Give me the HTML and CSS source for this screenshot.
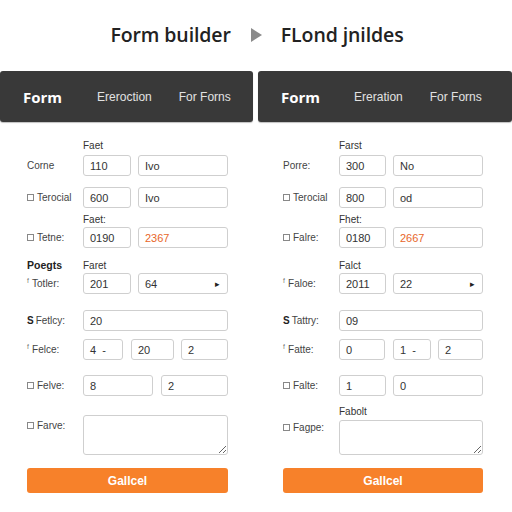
FILE: index.html
```html
<!DOCTYPE html>
<html>
<head>
<meta charset="utf-8">
<link rel="stylesheet" href="styles.css">
</head>
<body>
<div class="title">
  <span class="t1">Form builder</span>
  <svg class="tarrow" width="11" height="14" viewBox="0 0 11 14"><polygon points="0,0 11,7 0,14" fill="#8a8a8a"/></svg>
  <span class="t2">FLond jnildes</span>
</div>
<div class="panels">
  <div class="panel left">
    <div class="head"><span class="hb">Form</span><span class="h1">Ereroction</span><span class="h2">For Forns</span></div>
    <div class="body">
      <div class="cap m17"><span></span><span>Faet</span></div>
      <div class="row m4"><span class="lab">Corne</span><div class="fields"><div class="inp w48">110</div><div class="inp grow">Ivo</div></div></div>
      <div class="row m11"><span class="lab"><i class="cb"></i>Terocial</span><div class="fields"><div class="inp w48">600</div><div class="inp grow">Ivo</div></div></div>
      <div class="cap m5"><span></span><span>Faet:</span></div>
      <div class="row m2"><span class="lab"><i class="cb"></i>Tetne:</span><div class="fields"><div class="inp w48">0190</div><div class="inp grow orange">2367</div></div></div>
      <div class="cap m11"><span class="bold">Poegts</span><span>Faret</span></div>
      <div class="row m2"><span class="lab"><i class="f">ᶠ</i>Totler:</span><div class="fields"><div class="inp w48">201</div><div class="inp grow sel">64<span class="car">&#9656;</span></div></div></div>
      <div class="row m16"><span class="lab"><b>S</b> Fetlcy:</span><div class="fields"><div class="inp grow">20</div></div></div>
      <div class="row m8"><span class="lab"><i class="f">ᶠ</i>Felce:</span><div class="fields"><div class="inp w40">4 &nbsp;-</div><div class="inp w43 g8">20</div><div class="inp grow">2</div></div></div>
      <div class="row m15"><span class="lab"><i class="cb"></i>Felve:</span><div class="fields"><div class="inp w70">8</div><div class="inp grow g8">2</div></div></div>
      <div class="row tall m19"><span class="lab top"><i class="cb"></i>Farve:</span><div class="fields"><textarea class="ta h40" readonly></textarea></div></div>
      <div class="btn m13">Gallcel</div>
    </div>
  </div>
  <div class="panel right">
    <div class="head"><span class="hb">Form</span><span class="h1">Ereration</span><span class="h2">For Forns</span></div>
    <div class="body">
      <div class="cap m17"><span></span><span>Farst</span></div>
      <div class="row m4"><span class="lab">Porre:</span><div class="fields"><div class="inp w47">300</div><div class="inp grow">No</div></div></div>
      <div class="row m11"><span class="lab"><i class="cb"></i>Terocial</span><div class="fields"><div class="inp w47">800</div><div class="inp grow">od</div></div></div>
      <div class="cap m5"><span></span><span>Fhet:</span></div>
      <div class="row m2"><span class="lab"><i class="cb"></i>Falre:</span><div class="fields"><div class="inp w47">0180</div><div class="inp grow orange">2667</div></div></div>
      <div class="cap m11"><span></span><span>Falct</span></div>
      <div class="row m2"><span class="lab"><i class="f">ᶠ</i>Faloe:</span><div class="fields"><div class="inp w47">2011</div><div class="inp grow sel">22<span class="car">&#9656;</span></div></div></div>
      <div class="row m16"><span class="lab"><b>S</b> Tattry:</span><div class="fields"><div class="inp grow">09</div></div></div>
      <div class="row m8"><span class="lab"><i class="f">ᶠ</i>Fatte:</span><div class="fields"><div class="inp w46">0</div><div class="inp w38 g8">1 &nbsp;-</div><div class="inp grow">2</div></div></div>
      <div class="row m15"><span class="lab"><i class="cb"></i>Falte:</span><div class="fields"><div class="inp w47">1</div><div class="inp grow">0</div></div></div>
      <div class="cap m9"><span></span><span>Fabolt</span></div>
      <div class="row tall m3"><span class="lab top2"><i class="cb"></i>Fagpe:</span><div class="fields"><textarea class="ta h35" readonly></textarea></div></div>
      <div class="btn m13">Gallcel</div>
    </div>
  </div>
</div>
</body>
</html>
```
FILE: styles.css
```css
* { box-sizing: border-box; }
html, body { margin: 0; padding: 0; background: #ffffff; }
body { width: 512px; height: 512px; overflow: hidden; font-family: "Liberation Sans", Arial, sans-serif; color: #444; }

.title { height: 71px; display: flex; align-items: center; justify-content: center; padding-bottom: 2px; padding-left: 2px; }
.title span { font-family: "Open Sans", "DejaVu Sans", sans-serif; font-weight: 600; font-size: 19.5px; color: #222; letter-spacing: -0.1px; }
.tarrow { margin: 0 19px 0 20px; }

.panels { display: flex; gap: 5px; }
.panel { display: flex; flex-direction: column; }
.panel.left { width: 253px; }
.panel.right { width: 254px; }

.head { height: 51px; background: #393939; border-radius: 3px; display: flex; align-items: center; padding-left: 23px; box-shadow: 0 1px 1px rgba(0,0,0,0.25); }
.hb { font-family: "Open Sans", sans-serif; font-weight: 700; font-size: 15px; color: #fff; }
.h1, .h2 { font-family: "Liberation Sans", sans-serif; font-size: 12px; color: #e2e2e2; }
.left .h1 { margin-left: 35px; }
.left .h2 { margin-left: 27px; }
.right .h1 { margin-left: 34px; }
.right .h2 { margin-left: 27px; }

.body { display: flex; flex-direction: column; }
.left .body { padding: 0 25px 0 27px; }
.right .body { padding: 0 29px 0 25px; }

.cap { display: grid; grid-template-columns: 56px 1fr; height: 12px; align-items: center; font-size: 10px; color: #333; }
.cap .bold { font-weight: 700; font-size: 10.5px; color: #222; }

.row { display: grid; grid-template-columns: 56px 1fr; height: 21px; align-items: center; }
.row.tall { height: auto; align-items: start; }
.lab { font-size: 10px; color: #444; display: flex; align-items: center; white-space: nowrap; }
.lab b { font-weight: 700; color: #222; margin-right: 2px; }
.lab.top { padding-top: 5px; }
.lab.top2 { padding-top: 2px; }
.cb { display: inline-block; width: 7px; height: 7px; border: 1px solid #888; margin-right: 3px; }
.f { font-style: normal; font-size: 9px; color: #666; margin-right: 3px; position: relative; top: -2px; }

.fields { display: flex; gap: 7px; min-width: 0; }
.inp { height: 21px; border: 1px solid #cfcfcf; border-radius: 3px; font-size: 11px; color: #333; display: flex; align-items: center; padding-left: 6px; background: #fff; }
.orange { color: #e8662a; }
.sel { justify-content: space-between; padding-right: 7px; }
.car { font-size: 9px; color: #222; }
.grow { flex: 1; min-width: 0; }
.g8 { margin-left: 1px; }
.w38 { width: 38px; }
.w40 { width: 40px; }
.w43 { width: 43px; }
.w46 { width: 46px; }
.w47 { width: 47px; }
.w48 { width: 48px; }
.w70 { width: 70px; }

.ta { display: block; width: 100%; min-width: 0; border: 1px solid #cfcfcf; border-radius: 3px; margin: 0; padding: 0; background: #fff; font-family: inherit; }
.h40 { height: 40px; }
.h35 { height: 35px; }

.btn { height: 25px; background: #f7812a; border-radius: 3px; color: #fff; font-weight: 700; font-size: 12px; display: flex; align-items: center; justify-content: center; }

.m2 { margin-top: 2px; }
.m3 { margin-top: 3px; }
.m4 { margin-top: 4px; }
.m5 { margin-top: 5px; }
.m8 { margin-top: 8px; }
.m9 { margin-top: 9px; }
.m11 { margin-top: 11px; }
.m13 { margin-top: 13px; }
.m15 { margin-top: 15px; }
.m16 { margin-top: 16px; }
.m17 { margin-top: 17px; }
.m19 { margin-top: 19px; }
```
